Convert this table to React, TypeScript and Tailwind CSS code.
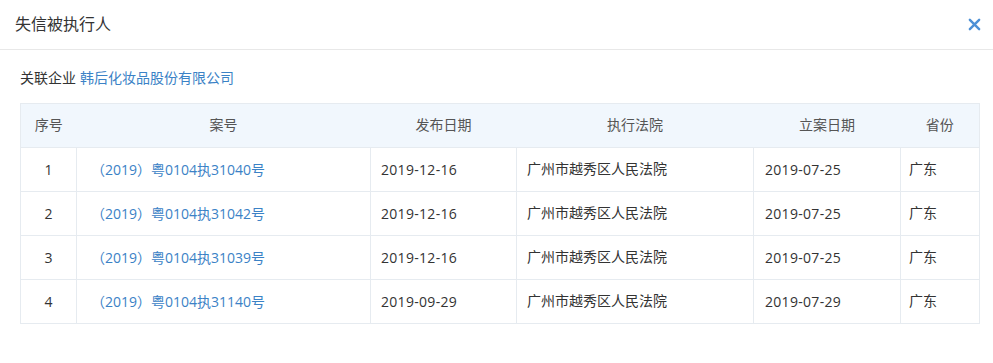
import React from "react";

const rows = [
  { no: "1", caseNo: "（2019）粤0104执31040号", pub: "2019-12-16", court: "广州市越秀区人民法院", reg: "2019-07-25", prov: "广东" },
  { no: "2", caseNo: "（2019）粤0104执31042号", pub: "2019-12-16", court: "广州市越秀区人民法院", reg: "2019-07-25", prov: "广东" },
  { no: "3", caseNo: "（2019）粤0104执31039号", pub: "2019-12-16", court: "广州市越秀区人民法院", reg: "2019-07-25", prov: "广东" },
  { no: "4", caseNo: "（2019）粤0104执31140号", pub: "2019-09-29", court: "广州市越秀区人民法院", reg: "2019-07-29", prov: "广东" },
];

const num = { fontFamily: '"Open Sans", "Noto Sans CJK SC", sans-serif' };

export default function App() {
  return (
    <div
      className="w-[993px] h-[363px] bg-white text-[#333]"
      style={{ fontFamily: '"Liberation Sans", "Noto Sans CJK SC", sans-serif' }}
    >
      <div className="h-[50px] border-b border-[#e8e8e8] flex items-center justify-between pl-[15px] pr-[12px]">
        <span className="text-[16px] text-[#333]">失信被执行人</span>
        <svg width="13" height="13" viewBox="0 0 14 14">
          <path d="M2 2 L12 12 M12 2 L2 12" stroke="#4d90d6" strokeWidth="2.6" strokeLinecap="round" />
        </svg>
      </div>
      <div className="px-[20px]">
        <div className="h-[53px] flex items-center text-[14px] pt-[4px]">
          <span className="text-[#333]">关联企业</span>
          <span className="ml-[4px] text-[#3b82c6]">韩后化妆品股份有限公司</span>
        </div>
        <table className="w-[959px] border-collapse text-[14px] table-fixed">
          <colgroup>
            <col className="w-[56px]" />
            <col className="w-[294px]" />
            <col className="w-[146px]" />
            <col className="w-[237px]" />
            <col className="w-[147px]" />
            <col className="w-[79px]" />
          </colgroup>
          <thead>
            <tr className="h-[44px] bg-[#f1f7fd] text-[#555] border border-[#e6ebf0]">
              <th className="font-normal text-center">序号</th>
              <th className="font-normal text-center">案号</th>
              <th className="font-normal text-center">发布日期</th>
              <th className="font-normal text-center">执行法院</th>
              <th className="font-normal text-center">立案日期</th>
              <th className="font-normal text-center">省份</th>
            </tr>
          </thead>
          <tbody>
            {rows.map((r) => (
              <tr key={r.no} className="h-[44px]">
                <td className="border border-[#e6ebf0] text-center" style={num}>{r.no}</td>
                <td className="border border-[#e6ebf0] pl-[14px] text-[#3b82c6]" style={num}>{r.caseNo}</td>
                <td className="border border-[#e6ebf0] pl-[10px] tracking-[0.3px]" style={num}>{r.pub}</td>
                <td className="border border-[#e6ebf0] pl-[10px]">{r.court}</td>
                <td className="border border-[#e6ebf0] pl-[11px] tracking-[0.3px]" style={num}>{r.reg}</td>
                <td className="border border-[#e6ebf0] pl-[8px]">{r.prov}</td>
              </tr>
            ))}
          </tbody>
        </table>
      </div>
    </div>
  );
}
